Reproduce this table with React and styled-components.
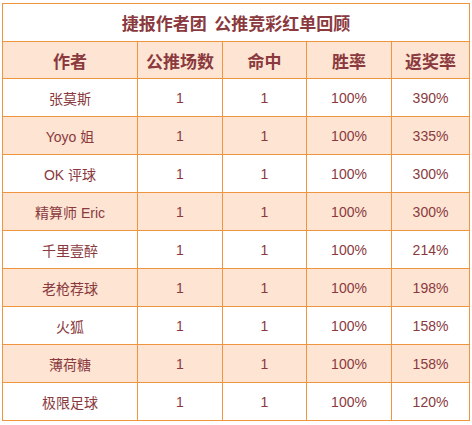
import React from "react";
import styled, { createGlobalStyle } from "styled-components";

const rows = [
  ["张莫斯", "1", "1", "100%", "390%"],
  ["Yoyo 姐", "1", "1", "100%", "335%"],
  ["OK 评球", "1", "1", "100%", "300%"],
  ["精算师 Eric", "1", "1", "100%", "300%"],
  ["千里壹醉", "1", "1", "100%", "214%"],
  ["老枪荐球", "1", "1", "100%", "198%"],
  ["火狐", "1", "1", "100%", "158%"],
  ["薄荷糖", "1", "1", "100%", "158%"],
  ["极限足球", "1", "1", "100%", "120%"],
];

const heads = ["作者", "公推场数", "命中", "胜率", "返奖率"];
const widths = [135, 85, 84, 85, 78];

const GlobalStyle = createGlobalStyle`
  body {
    margin: 0;
    background: #fff;
    font-family: "Liberation Sans", "Noto Sans CJK SC", sans-serif;
  }
`;

const Wrap = styled.div`
  padding: 3px 0 0 2px;
`;

const Table = styled.table`
  width: 468px;
  border-collapse: collapse;
  table-layout: fixed;
  color: #8a3a3e;
  td,
  th {
    border: 1px solid #f0953f;
    text-align: center;
    padding: 0;
  }
`;

const TitleCell = styled.th`
  height: 37px;
  font-size: 17px;
  font-weight: bold;
  font-family: "Noto Sans CJK SC", sans-serif;
  white-space: pre;
  background: #fff;
`;

const HeadCell = styled.th`
  height: 36px;
  font-size: 17px;
  font-weight: bold;
  font-family: "Noto Sans CJK SC", sans-serif;
  background: #fde4d3;
`;

const Row = styled.tr`
  background: ${(p) => (p.$shaded ? "#fde4d3" : "#fff")};
`;

const Cell = styled.td`
  height: 37px;
  font-size: 14px;
`;

export default function App() {
  return (
    <Wrap>
      <GlobalStyle />
      <Table>
        <colgroup>
          {widths.map((w, i) => (
            <col key={i} style={{ width: w }} />
          ))}
        </colgroup>
        <thead>
          <tr>
            <TitleCell colSpan={5}>{"捷报作者团  公推竞彩红单回顾"}</TitleCell>
          </tr>
          <tr>
            {heads.map((h) => (
              <HeadCell key={h}>{h}</HeadCell>
            ))}
          </tr>
        </thead>
        <tbody>
          {rows.map((r, i) => (
            <Row key={i} $shaded={i % 2 === 1}>
              {r.map((c, j) => (
                <Cell key={j}>{c}</Cell>
              ))}
            </Row>
          ))}
        </tbody>
      </Table>
    </Wrap>
  );
}
